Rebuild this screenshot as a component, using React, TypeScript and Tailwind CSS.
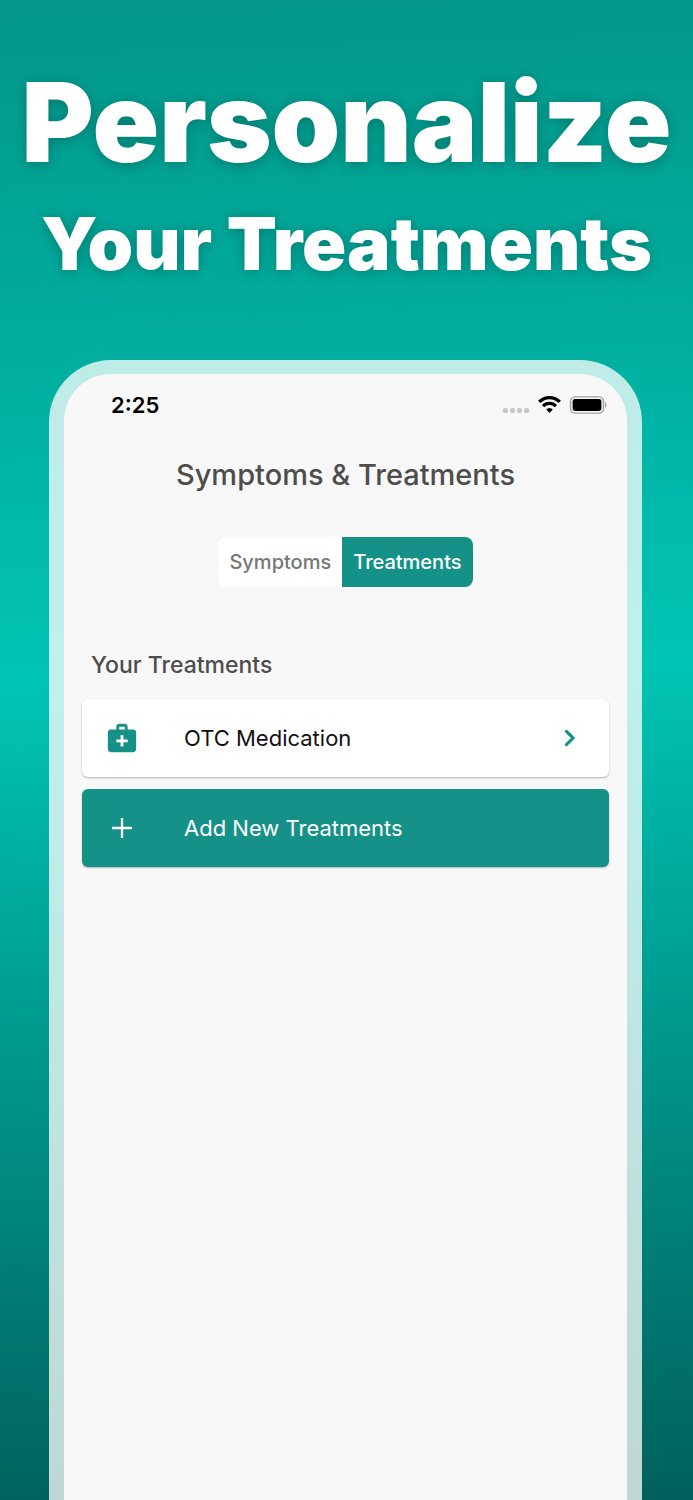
import type { ReactNode } from "react";

function StatusIcons() {
  return (
    <svg className="h-5 w-[105px]" viewBox="0 0 105 20" aria-hidden="true">
      <g fill="#c6c6c6">
        <rect x="1" y="13" width="5" height="5" rx="1.8" />
        <rect x="8" y="13" width="5" height="5" rx="1.8" />
        <rect x="15" y="13" width="5" height="5" rx="1.8" />
        <rect x="22" y="13" width="5" height="5" rx="1.8" />
      </g>
      <g fill="none" stroke="#000" strokeWidth="3.3">
        <path d="M37.2 6.9a14.4 14.4 0 0 1 20.6 0" />
        <path d="M41.1 11.1a9 9 0 0 1 12.8 0" />
      </g>
      <path d="M44.2 14.6a4.8 4.8 0 0 1 6.6 0L47.5 18z" fill="#000" />
      <rect x="68.5" y="1.9" width="33" height="16.2" rx="4.6" fill="none" stroke="#a0a0a0" strokeWidth="1.4" />
      <rect x="70.6" y="4" width="28.8" height="12" rx="2.4" fill="#000" />
      <path d="M103.1 7c1.8.7 1.8 5.3 0 6z" fill="#9a9a9a" />
    </svg>
  );
}

function MedicalBag() {
  return (
    <svg className="size-[34px]" viewBox="0 0 24 24" fill="#159188" aria-hidden="true">
      <path d="M20 6h-4V4c0-1.1-.9-2-2-2h-4c-1.1 0-2 .9-2 2v2H4c-1.1 0-2 .9-2 2v12c0 1.1.9 2 2 2h16c1.1 0 2-.9 2-2V8c0-1.1-.9-2-2-2zM10 4h4v2h-4V4zm6 11h-3v3h-2v-3H8v-2h3v-3h2v3h3v2z" />
    </svg>
  );
}

function Plus() {
  return (
    <svg className="size-[34px]" viewBox="0 0 24 24" fill="#fff" aria-hidden="true">
      <path d="M19 12.8h-6.2V19h-1.6v-6.2H5v-1.6h6.2V5h1.6v6.2H19z" />
    </svg>
  );
}

function Chevron() {
  return (
    <svg
      className="size-8"
      viewBox="0 0 24 24"
      fill="none"
      stroke="#159188"
      strokeWidth="2.3"
      strokeLinecap="round"
      aria-hidden="true"
    >
      <path d="M9.3 7 14.3 12l-5 5" />
    </svg>
  );
}

type RowProps = { icon: ReactNode; label: string; tone: string; trailing?: ReactNode };

function Row({ icon, label, tone, trailing }: RowProps) {
  return (
    <button
      type="button"
      className={`flex h-[78px] w-full items-center rounded-md px-[23px] text-left text-[22px] leading-8 shadow-[0_1px_2px_rgba(0,0,0,0.28)] ${tone}`}
    >
      {icon}
      <span className="ml-[45px] flex-1">{label}</span>
      {trailing}
    </button>
  );
}

export default function App() {
  return (
    <main className="flex min-h-screen flex-col bg-[linear-gradient(178deg,#03978a_0%,#00c4b4_45%,#00605b_100%)] font-['Inter','Liberation_Sans',sans-serif]">
      <header className="pt-[62px] text-center font-black whitespace-nowrap text-white [text-shadow:0_2px_14px_rgba(0,0,0,0.25)]">
        <h1>
          <span className="block text-[110px] leading-[120px]">Personalize</span>
          <span className="mt-[18px] block text-[73px] leading-[88px]">Your Treatments</span>
        </h1>
      </header>

      <div className="mr-[51px] ml-[49px] mt-[72px] flex flex-1 flex-col rounded-t-[62px] bg-white/75 px-[15px] pt-[14px]">
        <section className="flex-1 rounded-t-[47px] bg-[#f8f8f8] px-[18px]">
          <div className="flex items-center justify-between pt-5 pr-0.5 pl-[29px]">
            <time className="text-[22px] leading-[22px] font-semibold text-black">2:25</time>
            <StatusIcons />
          </div>

          <h2 className="mt-[39px] text-center text-[29px] leading-10 font-medium text-[#4d4d4d]">
            Symptoms &amp; Treatments
          </h2>

          <div className="mx-auto mt-[42px] flex h-[50px] w-fit overflow-hidden rounded-lg text-[20px] font-medium">
            <button type="button" aria-pressed="false" className="bg-white px-[11px] text-[#777777]">
              Symptoms
            </button>
            <button type="button" aria-pressed="true" className="bg-[#159188] px-[11px] text-white">
              Treatments
            </button>
          </div>

          <h3 className="mt-[62px] pl-[9px] text-[23px] leading-8 font-medium text-[#4d4d4d]">Your Treatments</h3>

          <div className="mt-[18px] flex flex-col gap-3">
            <Row icon={<MedicalBag />} label="OTC Medication" tone="bg-white text-[#111111]" trailing={<Chevron />} />
            <Row icon={<Plus />} label="Add New Treatments" tone="bg-[#159188] text-white" />
          </div>
        </section>
      </div>
    </main>
  );
}
